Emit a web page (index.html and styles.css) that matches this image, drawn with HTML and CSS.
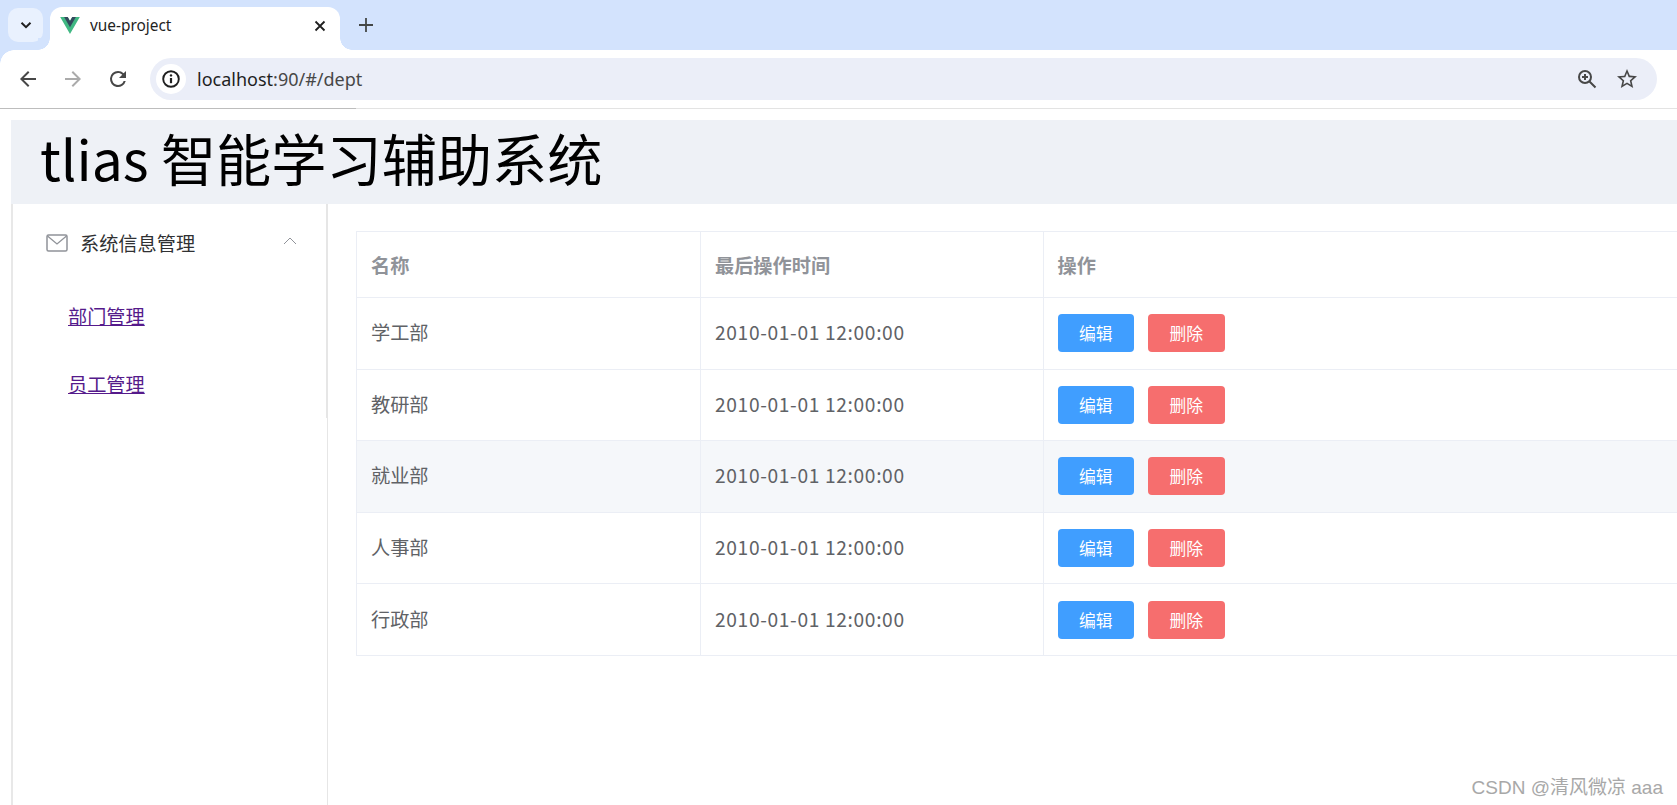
FILE: index.html
```html
<!DOCTYPE html>
<html lang="en">
<head>
    <meta charset="UTF-8">
    <meta name="viewport" content="width=device-width, initial-scale=1.0">
    <title>vue-project</title>
    <link rel="stylesheet" href="styles.css">
</head>
<body>

    <div class="tabstrip">
        <div class="tab-search">
            <svg width="14" height="14" viewBox="0 0 14 14"><path d="M2.5 4.8 7 9.2l4.5-4.4" fill="none" stroke="#1f1f1f" stroke-width="2"/></svg>
        </div>
        <div class="tab">
            <svg class="favicon" width="20" height="17" viewBox="0 0 261.76 226.69">
                <path fill="#41b883" d="M161.096.001l-30.225 52.351L100.647.001H-.005l130.876 226.688L261.749.001z"/>
                <path fill="#34495e" d="M161.096.001l-30.225 52.351L100.647.001H52.346l78.526 136.01L209.398.001z"/>
            </svg>
            <span class="tab-title">vue-project</span>
            <svg class="tab-close" width="12" height="12" viewBox="0 0 12 12"><path d="M1.5 1.5l9 9M10.500 1.500l-9 9" stroke="#1f1f1f" stroke-width="1.800" fill="none"/></svg>
        </div>
        <svg class="new-tab" width="14" height="14" viewBox="0 0 14 14"><path d="M7 0v14M0 7h14" stroke="#444746" stroke-width="1.800" fill="none"/></svg>
    </div>

    <div class="toolbar">
        <svg class="nav" width="24" height="24" viewBox="0 0 24 24"><path fill="#474747" d="M20 11H7.830l5.590-5.590L12 4l-8 8 8 8 1.410-1.410L7.830 13H20v-2z"/></svg>
        <svg class="nav" width="24" height="24" viewBox="0 0 24 24"><path fill="#ababab" d="M4 11h12.170l-5.590-5.590L12 4l8 8-8 8-1.410-1.410L16.170 13H4v-2z"/></svg>
        <svg class="nav" width="24" height="24" viewBox="0 0 24 24"><path fill="#474747" d="M17.650 6.350A7.960 7.960 0 0 0 12 4a8 8 0 1 0 7.740 10h-2.080A6 6 0 1 1 12 6c1.660 0 3.140.69 4.220 1.780L13 11h7V4l-2.350 2.350z"/></svg>
        <div class="omnibox">
            <div class="site-info">
                <svg width="22" height="22" viewBox="0 0 22 22">
                    <circle cx="11" cy="11" r="7.800" fill="none" stroke="#1f1f1f" stroke-width="1.900"/>
                    <path d="M11 10v5.200" stroke="#1f1f1f" stroke-width="2.200"/>
                    <circle cx="11" cy="7.400" r="1.200" fill="#1f1f1f"/>
                </svg>
            </div>
            <span class="url"><span class="host">localhost</span>:90/#/dept</span>
            <svg class="omni-icon" width="24" height="24" viewBox="0 0 24 24">
                <circle cx="10" cy="10" r="6" fill="none" stroke="#474747" stroke-width="2"/>
                <path d="M14.500 14.500l6 6M7 10h6M10 7v6" stroke="#474747" stroke-width="2" fill="none"/>
            </svg>
            <svg class="omni-icon" width="24" height="24" viewBox="0 0 24 24"><path fill="#474747" d="M22 9.240l-7.190-.620L12 2 9.190 8.630 2 9.240l5.460 4.730L5.820 21 12 17.270 18.180 21l-1.630-7.030L22 9.240zM12 15.400l-3.760 2.270 1-4.280-3.320-2.880 4.380-.380L12 6.100l1.710 4.040 4.380.380-3.320 2.880 1 4.280L12 15.400z"/></svg>
        </div>
    </div>

    <div class="page">
        <div class="page-header">tlias 智能学习辅助系统</div>
        <div class="page-body">
            <aside class="aside">
                <div class="menu">
                    <div class="menu-title">
                        <svg class="mail" width="22" height="18" viewBox="0 0 22 18">
                            <rect x="1" y="1" width="20" height="16" rx="1.500" fill="none" stroke="#909399" stroke-width="1.500"/>
                            <path d="M1.500 2l9.500 8 9.500-8" fill="none" stroke="#909399" stroke-width="1.300"/>
                        </svg>
                        <span>系统信息管理</span>
                        <svg class="arrow" width="14" height="8" viewBox="0 0 14 8"><path d="M1 7l6-6 6 6" fill="none" stroke="#909399" stroke-width="1"/></svg>
                    </div>
                    <div class="menu-item"><a href="#">部门管理</a></div>
                    <div class="menu-item"><a href="#">员工管理</a></div>
                </div>
            </aside>
            <main class="main">
                <table>
                    <thead>
                        <tr>
                            <th class="col-name">名称</th>
                            <th class="col-time">最后操作时间</th>
                            <th>操作</th>
                        </tr>
                    </thead>
                    <tbody>
                        <tr>
                            <td>学工部</td>
                            <td class="time">2010-01-01 12:00:00</td>
                            <td class="ops"><button class="btn btn-edit">编辑</button><button class="btn btn-del">删除</button></td>
                        </tr>
                        <tr>
                            <td>教研部</td>
                            <td class="time">2010-01-01 12:00:00</td>
                            <td class="ops"><button class="btn btn-edit">编辑</button><button class="btn btn-del">删除</button></td>
                        </tr>
                        <tr class="hover">
                            <td>就业部</td>
                            <td class="time">2010-01-01 12:00:00</td>
                            <td class="ops"><button class="btn btn-edit">编辑</button><button class="btn btn-del">删除</button></td>
                        </tr>
                        <tr>
                            <td>人事部</td>
                            <td class="time">2010-01-01 12:00:00</td>
                            <td class="ops"><button class="btn btn-edit">编辑</button><button class="btn btn-del">删除</button></td>
                        </tr>
                        <tr>
                            <td>行政部</td>
                            <td class="time">2010-01-01 12:00:00</td>
                            <td class="ops"><button class="btn btn-edit">编辑</button><button class="btn btn-del">删除</button></td>
                        </tr>
                    </tbody>
                </table>
            </main>
        </div>
    </div>

    <div class="watermark">CSDN @清风微凉 aaa</div>

</body>
</html>
```

FILE: styles.css
```css
html, body {
    height: 100%;
}
body {
    margin: 0;
    overflow: hidden;
    display: flex;
    flex-direction: column;
    background: #fff;
    font-family: "Noto Sans CJK SC", "Noto Sans", sans-serif;
}

/* browser chrome */
.tabstrip {
    height: 50px;
    flex: none;
    display: flex;
    align-items: flex-end;
    background: #d3e3fd;
    padding-left: 8px;
}
.tab-search {
    width: 35px;
    height: 34px;
    margin-bottom: 8px;
    border-radius: 10px;
    background: #e9f1fe;
    display: flex;
    align-items: center;
    justify-content: center;
}
.tab {
    position: relative;
    width: 290px;
    height: 43px;
    margin-left: 7px;
    background: #fff;
    border-radius: 12px 12px 0 0;
    display: flex;
    align-items: center;
    box-sizing: border-box;
    padding: 0 14px 6px 10px;
}
.tab::before, .tab::after {
    content: "";
    position: absolute;
    bottom: 0;
    width: 12px;
    height: 12px;
}
.tab::before {
    left: -12px;
    background: radial-gradient(circle at 0 0, #d3e3fd 11.500px, #fff 12px);
}
.tab::after {
    right: -12px;
    background: radial-gradient(circle at 100% 0, #d3e3fd 11.500px, #fff 12px);
}
.favicon {
    flex: none;
}
.tab-title {
    margin-left: 10px;
    flex: 1;
    font-family: "Noto Sans", sans-serif;
    font-size: 15.400px;
    color: #1f1f1f;
}
.new-tab {
    margin: 0 0 18px 19px;
}
.toolbar {
    position: relative;
    height: 59px;
    flex: none;
    display: flex;
    align-items: center;
    box-sizing: border-box;
    padding: 0 0 1px 16px;
    gap: 21px;
    background: #fff;
    border-bottom: 1px solid #e3e3e3;
}
.toolbar::before {
    content: "";
    position: absolute;
    left: 0;
    top: 0;
    width: 14px;
    height: 14px;
    background: radial-gradient(circle at 100% 100%, #fff 13.500px, #d3e3fd 14px);
}
.toolbar::after {
    content: "";
    position: absolute;
    left: 0;
    bottom: -1px;
    width: 356px;
    height: 1px;
    background: #bdbdbd;
}
.nav {
    flex: none;
}
.omnibox {
    width: 1507px;
    height: 42px;
    margin-left: -1px;
    box-sizing: border-box;
    background: #ebeef8;
    border-radius: 21px;
    display: flex;
    align-items: center;
    padding: 0 18px 0 6px;
}
.site-info {
    width: 30px;
    height: 30px;
    border-radius: 50%;
    background: #fff;
    display: flex;
    align-items: center;
    justify-content: center;
}
.url {
    flex: 1;
    margin-left: 11px;
    font-family: "Noto Sans", sans-serif;
    font-size: 18px;
    color: #474747;
}
.host {
    color: #1f1f1f;
}
.omni-icon {
    margin-left: 16px;
}

/* page */
.page {
    flex: 1;
    min-height: 0;
    display: flex;
    flex-direction: column;
    padding: 11px 0 0 11px;
}
.page-header {
    height: 84px;
    flex: none;
    box-sizing: border-box;
    padding-left: 29px;
    background: #eef1f6;
    color: #000;
    font-size: 55.200px;
    line-height: 74px;
    white-space: nowrap;
}
.page-body {
    flex: 1;
    min-height: 0;
    display: flex;
}
.aside {
    width: 317px;
    flex: none;
    box-sizing: border-box;
    border-left: 2px solid #e8e8e8;
    border-right: 1px solid #e6e6e6;
}
.menu {
    height: 214px;
    border-right: 1px solid #e6e6e6;
    box-sizing: border-box;
}
.menu-title {
    height: 78px;
    display: flex;
    align-items: center;
    padding: 0 29px 0 33px;
    color: #303133;
    font-size: 19.200px;
}
.menu-title span {
    flex: 1;
    margin-left: 12px;
}
.menu-title .arrow {
    margin-bottom: 4px;
}
.menu-item {
    height: 68px;
    display: flex;
    align-items: center;
    padding-left: 55px;
    font-size: 19.200px;
}
.menu-item a {
    color: #551a8b;
}
.main {
    flex: 1;
    min-width: 0;
    padding: 27px 0 0 28px;
}

/* table */
table {
    width: 1400px;
    table-layout: fixed;
    border-collapse: collapse;
    font-size: 19.200px;
    color: #606266;
}
th, td {
    border: 1px solid #ebeef5;
    padding: 0 14px;
    text-align: left;
}
th {
    height: 65px;
    color: #909399;
    font-weight: bold;
}
th.col-name {
    width: 315px;
}
th.col-time {
    width: 313.500px;
}
td {
    box-sizing: border-box;
    height: 71.600px;
    padding-bottom: 2px;
}
td.ops {
    padding-bottom: 0;
}
td.time {
    letter-spacing: 0.650px;
}
tr.hover td {
    background: #f5f7fa;
}
.btn {
    width: 76.500px;
    height: 38px;
    padding: 0;
    border: none;
    border-radius: 4px;
    color: #fff;
    font-family: inherit;
    font-size: 16.800px;
    vertical-align: middle;
}
.btn-edit {
    background: #409eff;
}
.btn-del {
    margin-left: 14px;
    background: #f66e6e;
}

.watermark {
    position: absolute;
    right: 14px;
    bottom: 6px;
    font-family: "Liberation Sans", "Noto Sans CJK SC", sans-serif;
    font-size: 19px;
    color: #a8a8a8;
    text-shadow: 0 0 1px #fff;
}
```
